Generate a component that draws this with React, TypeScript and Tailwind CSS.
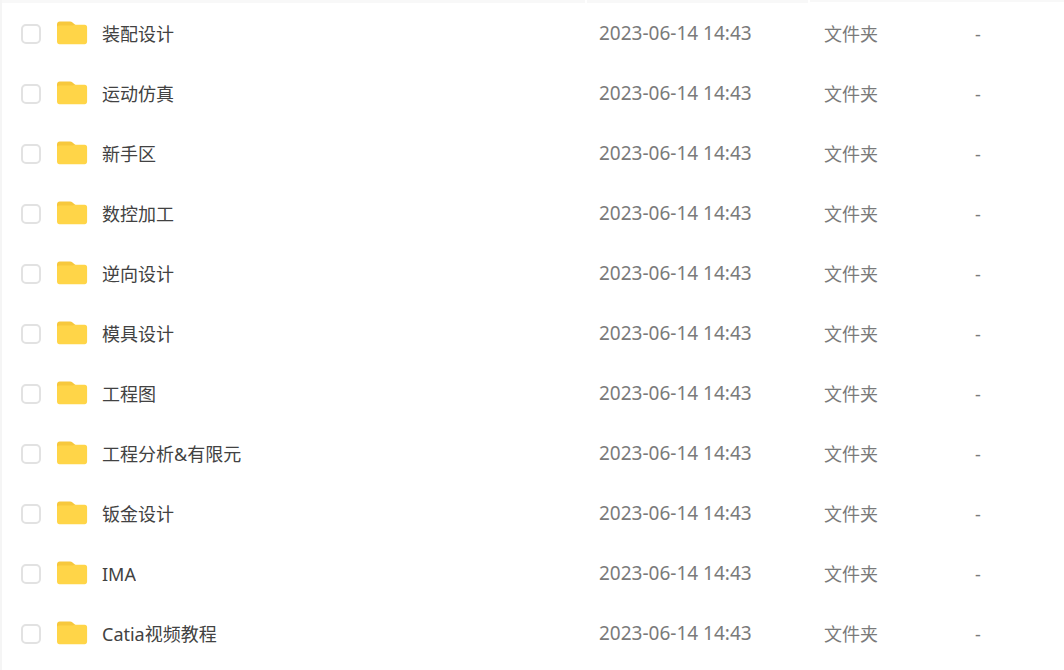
import React, { useState } from 'react';

interface FileRow {
  name: string;
  modified: string;
  type: string;
  size: string;
}

const names = [
  '装配设计',
  '运动仿真',
  '新手区',
  '数控加工',
  '逆向设计',
  '模具设计',
  '工程图',
  '工程分析&有限元',
  '钣金设计',
  'IMA',
  'Catia视频教程',
];

const files: FileRow[] = names.map((name) => ({
  name,
  modified: '2023-06-14 14:43',
  type: '文件夹',
  size: '-',
}));

const FolderIcon: React.FC<{ className?: string }> = ({ className }) => (
  <svg viewBox="0 0 32 24" className={className} aria-hidden="true">
    <path d="M3.8 0.5H14C15 0.5 15.8 0.8 16.5 1.4L19.5 4V10H1V3.3C1 1.6 2.1 0.5 3.8 0.5Z" fill="#f7c83c" />
    <path d="M1 6.4C1 5.2 2 4.4 3.2 4.4H16.4C17.2 4.4 17.8 4.2 18.4 3.7H28.6C30.2 3.7 31.1 4.7 31.1 6.2V20.6C31.1 22.2 30.1 23.2 28.6 23.2H3.5C1.9 23.2 1 22.2 1 20.6Z" fill="#ffd548" />
  </svg>
);

const App: React.FC = () => {
  const [selected, setSelected] = useState<string[]>([]);

  const toggle = (name: string) => {
    setSelected((prev) => (prev.includes(name) ? prev.filter((n) => n !== name) : [...prev, name]));
  };

  return (
    <div className="min-h-screen bg-white border-l-2 border-[#f5f5f5] overflow-hidden font-['Noto_Sans','Noto_Sans_CJK_SC',sans-serif]">
      <table className="w-full table-fixed border-collapse text-left">
        <colgroup>
          <col className="w-[54px]" />
          <col />
          <col className="w-[225px]" />
          <col className="w-[151px]" />
          <col className="w-[89px]" />
        </colgroup>

        {/* Bottom edge of the header bar */}
        <thead>
          <tr className="h-1 align-top">
            <td colSpan={2} className="p-0"><div className="h-[3px] mr-[14px] bg-[#f8f8f8]" /></td>
            <td className="p-0"><div className="h-[3px] -ml-3 mr-4 bg-[#f8f8f8]" /></td>
            <td colSpan={2} className="p-0"><div className="h-[2px] -ml-[14px] bg-[#f8f8f8]" /></td>
          </tr>
        </thead>

        <tbody>
          {files.map((file) => (
            <tr key={file.name} className="h-[60px] text-lg text-[#7a7a7a]">
              <td className="p-0 pl-[19px]">
                <input
                  type="checkbox"
                  aria-label={file.name}
                  checked={selected.includes(file.name)}
                  onChange={() => toggle(file.name)}
                  className="block w-5 h-5 appearance-none rounded-[5px] border-2 border-[#e2e2e2] bg-white checked:bg-[#ffd74b]"
                />
              </td>
              <td className="p-0">
                <div className="flex items-center gap-[14px] text-[#424242]">
                  <FolderIcon className="w-8 h-6 mb-0.5 shrink-0" />
                  <span className="truncate">{file.name}</span>
                </div>
              </td>
              <td className="p-0 text-[19px]">{file.modified}</td>
              <td className="p-0">{file.type}</td>
              <td className="p-0">{file.size}</td>
            </tr>
          ))}
        </tbody>
      </table>
    </div>
  );
};

export default App;
